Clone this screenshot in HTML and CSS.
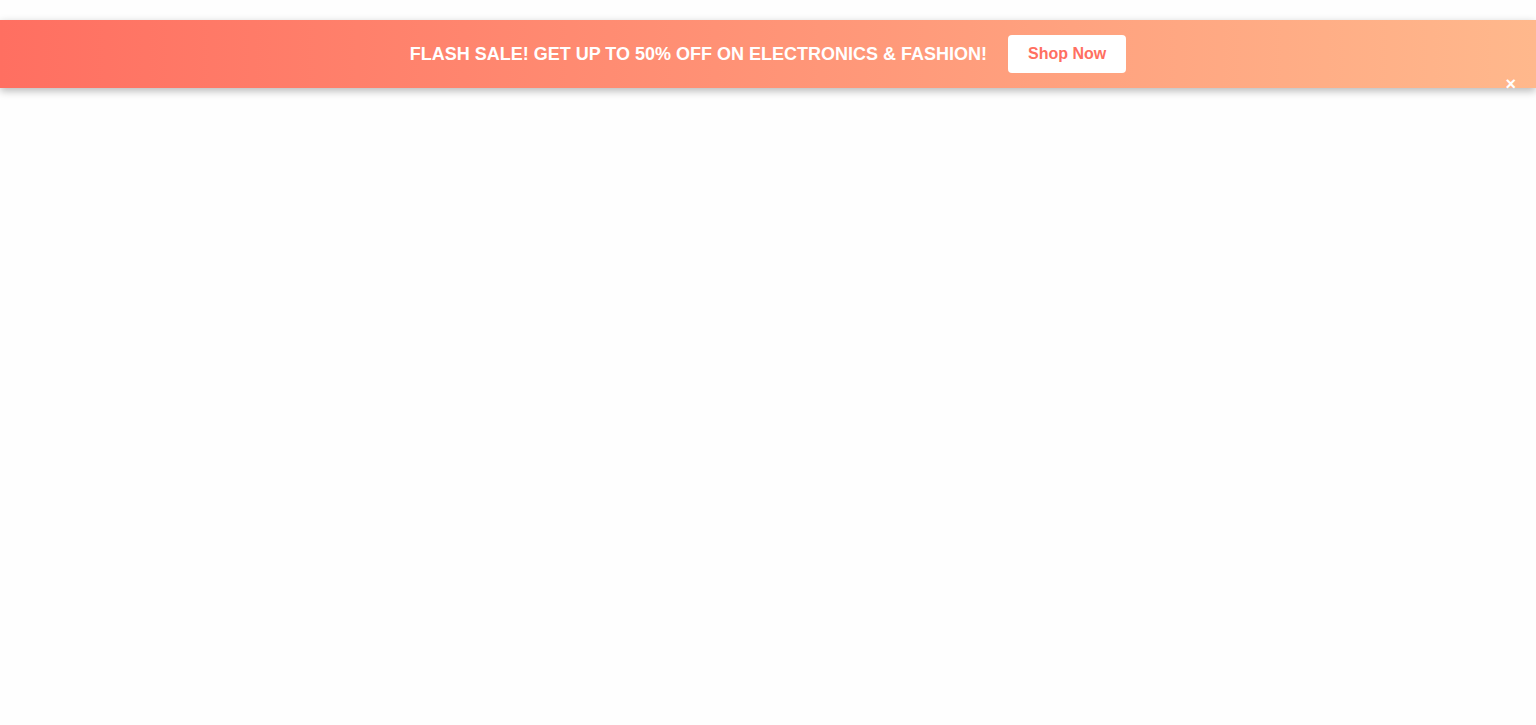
FILE: index.html
```html
<!DOCTYPE html>
<html lang="en">
<head>
<meta charset="utf-8">
<title>Flash Sale</title>
<link rel="stylesheet" href="styles.css">
</head>
<body>
<div class="banner">
  <div class="banner-content">
    <span class="banner-text">Flash Sale! Get up to 50% off on Electronics &amp; Fashion!</span>
    <a class="shop-btn" href="#">Shop Now</a>
  </div>
  <button class="close-btn" aria-label="Close">&times;</button>
</div>
</body>
</html>
```
FILE: styles.css
```css
html, body {
  margin: 0;
  padding: 0;
  background: #fefefe;
  font-family: "Liberation Sans", Arial, sans-serif;
}
body {
  padding-top: 20px;
  min-height: 100vh;
  box-sizing: border-box;
}
.banner {
  position: relative;
  z-index: 10;
  height: 68px;
  background: linear-gradient(90deg, #ff6f61, #ffb88c);
  box-shadow: 0 3px 8px rgba(0, 0, 0, 0.28);
  display: flex;
  align-items: center;
  justify-content: center;
}
.banner-content {
  display: flex;
  align-items: center;
  gap: 21px;
}
.banner-text {
  color: #fff;
  font-weight: bold;
  font-size: 18px;
  text-transform: uppercase;
}
.shop-btn {
  display: inline-block;
  background: #fff;
  color: #ff6f61;
  font-weight: bold;
  font-size: 16px;
  text-decoration: none;
  padding: 10px 20px;
  border-radius: 4px;
}
.close-btn {
  position: absolute;
  right: 20px;
  bottom: -5px;
  background: none;
  border: none;
  color: #fff;
  font-family: "Liberation Sans", Arial, sans-serif;
  font-weight: bold;
  font-size: 18px;
  line-height: 18px;
  padding: 0;
  cursor: pointer;
}
```
